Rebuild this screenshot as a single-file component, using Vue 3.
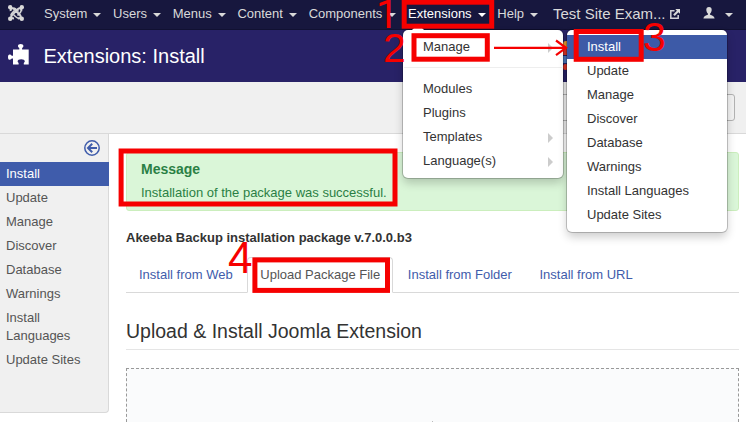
<script setup>
const navItems = ['System', 'Users', 'Menus', 'Content', 'Components', 'Extensions', 'Help']
const sideItems = ['Install', 'Update', 'Manage', 'Discover', 'Database', 'Warnings', 'Install Languages', 'Update Sites']
const tabs = ['Install from Web', 'Upload Package File', 'Install from Folder', 'Install from URL']
const extensionItems = [
  { label: 'Modules', sub: false },
  { label: 'Plugins', sub: false },
  { label: 'Templates', sub: true },
  { label: 'Language(s)', sub: true },
]
</script>

<template>
  <div class="page">
    <nav class="navbar">
      <svg class="logo" viewBox="0 0 16 16" width="16" height="16">
        <g fill="none" stroke="#d4d4d6" stroke-width="2.100">
          <path d="M2.700 6C2.200 3.600 4.200 2.400 6 4l6 6M10 13.300C12.400 13.800 13.600 11.800 12 10M13.300 6C13.800 3.600 11.800 2.400 10 4l-6 6M6 13.300C3.600 13.800 2.400 11.800 4 10" />
          <path d="M5.500 2.900c1.400-.2 2 .5 5 3.600M2.900 10.500c-.2-1.400.5-2 3.600-5M10.500 13.100c-1.400.2-2-.5-5-3.600M13.100 5.500c.2 1.400-.5 2-3.600 5" stroke-width="1.500" />
        </g>
        <g fill="#d9d9d9">
          <circle cx="2.200" cy="2.200" r="2.200" /><circle cx="13.800" cy="2.200" r="2.200" />
          <circle cx="2.200" cy="13.800" r="2.200" /><circle cx="13.800" cy="13.800" r="2.200" />
        </g>
      </svg>
      <ul class="nav">
        <li v-for="item in navItems" :key="item" :class="{ open: item === 'Extensions' }">
          {{ item }}<span class="caret"></span>
        </li>
      </ul>
      <span class="site">Test Site Exam...</span>
      <svg class="external" viewBox="0 0 10 10" width="10" height="10">
        <path d="M4.500 1.700H.8v7.500h7.400V6" fill="none" stroke="#d0d0d6" stroke-width="1.500" />
        <path d="M5.300 0H10v4.700L8.400 3.200 4.700 6.900 3.200 5.400 6.900 1.700z" fill="#d9d9d9" />
      </svg>
      <svg class="user" viewBox="0 0 12 12" width="12" height="12">
        <path d="M6 0C4.200 0 3.200 1.300 3.300 3c.1 1.600.7 2.800 1.600 3.500v1.200C3 8.300.6 8.900.4 11.500h11.200C11.400 8.900 9 8.300 7.100 7.700V6.500C8 5.800 8.600 4.600 8.700 3 8.800 1.300 7.800 0 6 0z" fill="#d9d9d9" />
      </svg>
      <span class="caret"></span>
    </nav>

    <header class="header">
      <svg class="puzzle" viewBox="0 0 21 21" width="21" height="21">
        <path d="M5 5.500h6.300V4C10.300 3.200 10 2.500 10 1.900 10 .7 11.200 0 12.700 0s2.700.7 2.700 1.900c0 .6-.3 1.300-1.300 2.100v1.500H20.700V20.500H15.800V19c.7-.6 1-1.100 1-1.700 0-1.300-1.500-2-3.600-2s-3.600.7-3.600 2c0 .6.300 1.100 1 1.700v1.500H5V14.600H3.800C3 15.400 2.500 15.800 1.600 15.800.5 15.800 0 14.700 0 13.200s.5-2.600 1.600-2.600c.9 0 1.400.4 2.200 1.200H5z" fill="#fff" />
      </svg>
      <h1>Extensions: Install</h1>
      <div class="brand"><i class="b1"></i><i class="b2"></i><i class="b3"></i><i class="b4"></i></div>
    </header>

    <div class="subhead"><div class="toolbar-button"></div></div>

    <div class="content">
      <aside class="sidebar">
        <svg class="toggle" viewBox="0 0 16 16" width="16" height="16">
          <circle cx="8" cy="8" r="7.200" fill="none" stroke="#3f5cab" stroke-width="1.500" />
          <path d="M13 8H4.500M8.200 3.700L4 8l4.200 4.300" fill="none" stroke="#3f5cab" stroke-width="2" />
        </svg>
        <ul>
          <li v-for="(item, i) in sideItems" :key="item" :class="{ active: i === 0 }">{{ item }}</li>
        </ul>
      </aside>
      <main class="main">
        <section class="alert">
          <h4>Message</h4>
          <p>Installation of the package was successful.</p>
        </section>
        <p class="package">Akeeba Backup installation package v.7.0.0.b3</p>
        <ul class="tabs">
          <li v-for="(tab, i) in tabs" :key="tab" :class="{ active: i === 1 }">{{ tab }}</li>
        </ul>
        <h2>Upload &amp; Install Joomla Extension</h2>
        <div class="dropzone"><span class="speck"></span></div>
      </main>
    </div>

    <div class="menu extensions-menu">
      <span class="nub"></span>
      <div class="entry">Manage<span class="arrow"></span></div>
      <div class="divider"></div>
      <div v-for="item in extensionItems" :key="item.label" class="entry">
        {{ item.label }}<span v-if="item.sub" class="arrow"></span>
      </div>
    </div>
    <div class="menu manage-menu">
      <div v-for="(item, i) in sideItems" :key="item" class="entry" :class="{ active: i === 0 }">{{ item }}</div>
    </div>

    <svg class="marks" viewBox="0 0 746 422" width="746" height="422">
      <g fill="none" stroke="#f60000" stroke-width="5">
        <rect x="404.200" y="2.200" width="87.500" height="24" />
        <rect x="414" y="35.700" width="73.300" height="23.500" />
        <rect x="576.200" y="31.500" width="65" height="27.800" />
        <rect x="121.100" y="151" width="273.900" height="53" />
        <rect x="254.900" y="259.900" width="132.600" height="30.500" />
        <path d="M494 47.800h72M556 40.500l10 7.300-10 7.300" stroke-width="2.200" />
      </g>
    </svg>
    <span class="step s1">1</span>
    <span class="step s2">2</span>
    <span class="step s3">3</span>
    <span class="step s4">4</span>
  </div>
</template>

<style>
body { margin: 0; overflow: hidden; }
</style>

<style scoped>
.page {
  position: relative;
  width: 746px;
  height: 422px;
  overflow: hidden;
  background: #fff;
  color: #333;
  font: 13px/18px "Liberation Sans", Arial, sans-serif;
}
ul, h1, h2, h4, p { margin: 0; padding: 0; list-style: none; }
.navbar {
  display: flex;
  box-sizing: border-box;
  height: 30px;
  padding: 5px 0 0 8px;
  background: #17173e;
  border-bottom: 1px solid #111132;
  color: #d9d9d9;
}
.logo { flex: none; margin-right: 20px; }
.nav { display: flex; gap: 11.7px; flex: none; width: 509px; }
.nav li { display: flex; white-space: nowrap; }
.nav .open { color: #fff; }
.caret {
  flex: none;
  margin: 8px 0 0 6px;
  width: 0;
  height: 0;
  border: 4px solid transparent;
  border-top-color: currentColor;
  border-bottom: 0;
}
.site { flex: none; width: 117px; font-size: 15px; white-space: nowrap; }
.external { flex: none; margin-top: 4px; }
.user { flex: none; margin: 2px 5px 0 23px; }
.navbar > .caret { margin-left: 5px; }
.header {
  display: flex;
  align-items: center;
  box-sizing: border-box;
  height: 52px;
  padding-left: 8px;
  background: #282267;
  color: #fff;
}
.puzzle { margin: 0 14.5px 3px 0; }
h1 { font-size: 20px; line-height: 30px; font-weight: normal; flex: none; width: 519px; }
.brand { display: grid; width: 5px; height: 30px; overflow: hidden; }
.b1 { background: #e89a2e; border-radius: 3px 0 0 0; height: 6px; }
.b2 { background: #dc3325; height: 7px; }
.b3 { background: #4a78bd; height: 7px; }
.b4 { background: #dc3325; height: 6px; border-radius: 4px; }
.subhead {
  display: flex;
  justify-content: flex-end;
  box-sizing: border-box;
  height: 52px;
  padding: 12px 11px 0 0;
  background: #f0f0f0;
  border-bottom: 1px solid #d9d9d9;
}
.toolbar-button { box-sizing: border-box; width: 210px; height: 27px; border: 1px solid #b3b3b3; border-radius: 3px; background: #f3f3f3; }
.content { display: flex; align-items: flex-start; }
.sidebar {
  display: flex;
  flex-direction: column;
  box-sizing: border-box;
  width: 109px;
  height: 279px;
  padding-top: 6px;
  background: #f0f0f0;
  border: solid #d9d9d9;
  border-width: 0 1px 1px 0;
  border-radius: 0 0 4px 0;
}
.toggle { align-self: flex-end; margin: 0 8px 6px 0; }
.sidebar li { padding: 3px 20px 3px 6px; color: #555; }
.sidebar li.active { background: #3f5cab; color: #fff; margin-right: -1px; }
.main { display: flex; flex-direction: column; width: 613px; padding: 18px 0 0 17px; }
.alert {
  box-sizing: border-box;
  height: 59px;
  padding: 7px 14px;
  background: #daf6d8;
  border: 1px solid #cbeebd;
  border-radius: 3px;
  color: #2a8045;
}
.alert h4 { font-size: 14px; line-height: 18px; margin-bottom: 6px; }
.package { margin-top: 18px; font-weight: bold; }
.tabs { display: flex; margin-top: 10px; border-bottom: 1px solid #d9d9d9; height: 35px; }
.tabs li {
  box-sizing: border-box;
  height: 36px;
  padding: 8px 12px;
  margin-right: 1.6px;
  border: 1px solid transparent;
  color: #3f5cab;
  white-space: nowrap;
}
.tabs li.active { background: #fff; border-color: #d9d9d9; border-bottom-color: #fff; border-radius: 4px 4px 0 0; color: #555; }
h2 { margin-top: 18px; height: 38px; line-height: 40px; font-size: 19.5px; font-weight: normal; border-bottom: 1px solid #e5e5e5; }
.dropzone { display: flex; align-items: flex-end; box-sizing: border-box; height: 54px; margin-top: 18px; border: 1px dashed #999; border-bottom: 0; background: #fafbfc; }
.speck { width: 1px; height: 1px; margin-left: 305px; background: #bbb; }
.menu {
  position: absolute;
  top: 30px;
  box-sizing: border-box;
  width: 160px;
  padding: 5px 0;
  background: #fff;
  border-radius: 5px;
  box-shadow: 0 0 0 1px rgba(0, 0, 0, 0.2), 0 5px 10px rgba(0, 0, 0, 0.2);
}
.extensions-menu { left: 403px; }
.manage-menu { left: 567px; }
.entry { display: flex; justify-content: space-between; align-items: center; padding: 3px 10px 3px 20px; color: #333; }
.manage-menu .entry.active { background: #3d5aa7; color: #fff; }
.arrow { border: 5px solid transparent; border-left-color: #ccc; border-right: 0; margin-top: 2px; }
.divider { height: 1px; margin: 8px 1px 9px; background: #eee; }
.nub { position: absolute; left: 9px; top: -6px; border: 6px solid transparent; border-bottom-color: #fff; border-top: 0; }
.marks { position: absolute; left: 0; top: 0; }
.step { position: absolute; color: #f60000; font-size: 41px; line-height: 40px; }
.s1 { left: 376px; top: -5px; font-family: Roboto, sans-serif; font-size: 40px; }
.s2 { left: 383px; top: 28px; }
.s3 { left: 643px; top: 17px; }
.s4 { left: 228px; top: 238px; font-size: 44px; }
</style>
